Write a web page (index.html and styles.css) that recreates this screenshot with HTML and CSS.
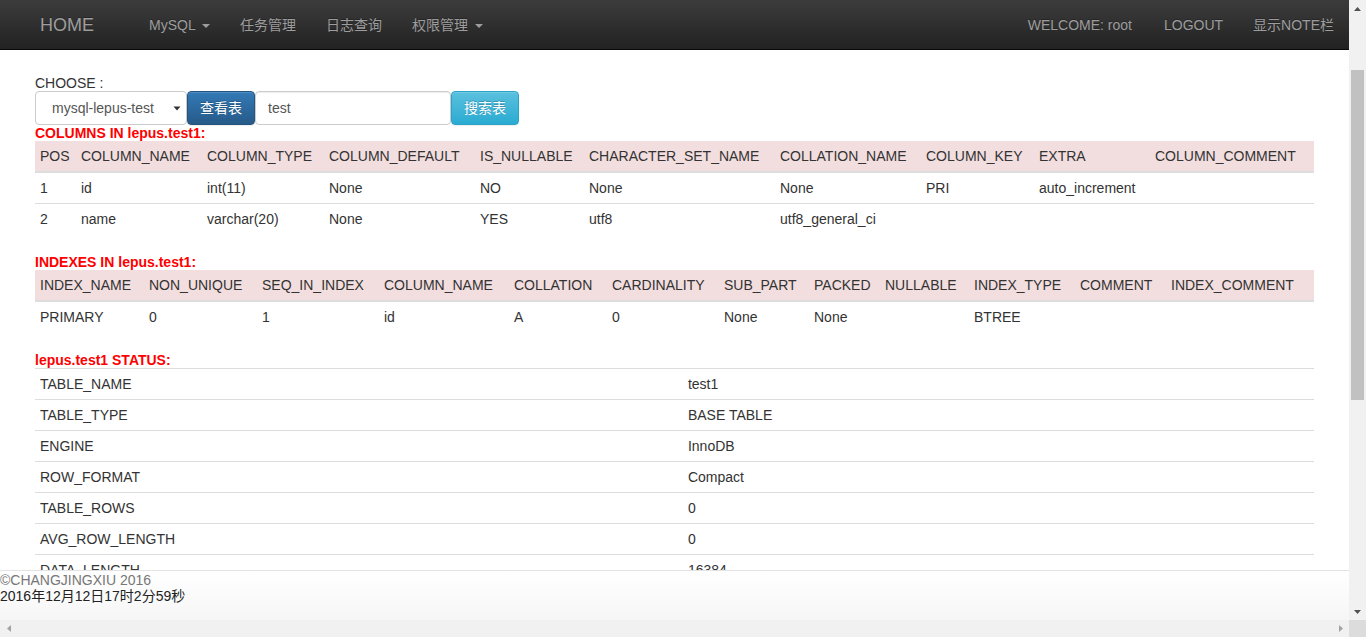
FILE: index.html
```html
<!DOCTYPE html>
<html lang="zh-CN">
<head>
<meta charset="utf-8">
<title>lepus</title>
<link rel="stylesheet" href="styles.css">
</head>
<body>
<div class="screen">
  <div class="page">
    <nav class="navbar">
      <div class="nav-left">
        <a class="brand">HOME</a>
        <ul class="nav">
          <li><a>MySQL <span class="caret"></span></a></li>
          <li><a>任务管理</a></li>
          <li><a>日志查询</a></li>
          <li><a>权限管理 <span class="caret"></span></a></li>
        </ul>
      </div>
      <ul class="nav">
        <li><a class="welcome">WELCOME: root</a></li>
        <li><a>LOGOUT</a></li>
        <li><a>显示NOTE栏</a></li>
      </ul>
    </nav>

    <main class="content">
      <div class="choose-label">CHOOSE :</div>
      <div class="toolbar">
        <div class="select">
          <span>mysql-lepus-test</span>
          <svg class="select-arrow" width="8" height="5" viewBox="0 0 8 5"><path d="M0.5 0.5h7L4 4.5z" fill="#333"/></svg>
        </div>
        <button class="btn btn-primary">查看表</button>
        <div class="input">test</div>
        <button class="btn btn-info">搜索表</button>
      </div>

      <div class="section-title">COLUMNS IN lepus.test1:</div>
      <table class="table cols">
        <thead>
          <tr><th>POS</th><th>COLUMN_NAME</th><th>COLUMN_TYPE</th><th>COLUMN_DEFAULT</th><th>IS_NULLABLE</th><th>CHARACTER_SET_NAME</th><th>COLLATION_NAME</th><th>COLUMN_KEY</th><th>EXTRA</th><th>COLUMN_COMMENT</th></tr>
        </thead>
        <tbody>
          <tr><td>1</td><td>id</td><td>int(11)</td><td>None</td><td>NO</td><td>None</td><td>None</td><td>PRI</td><td>auto_increment</td><td></td></tr>
          <tr><td>2</td><td>name</td><td>varchar(20)</td><td>None</td><td>YES</td><td>utf8</td><td>utf8_general_ci</td><td></td><td></td><td></td></tr>
        </tbody>
      </table>

      <div class="section-title">INDEXES IN lepus.test1:</div>
      <table class="table idx">
        <thead>
          <tr><th>INDEX_NAME</th><th>NON_UNIQUE</th><th>SEQ_IN_INDEX</th><th>COLUMN_NAME</th><th>COLLATION</th><th>CARDINALITY</th><th>SUB_PART</th><th>PACKED</th><th>NULLABLE</th><th>INDEX_TYPE</th><th>COMMENT</th><th>INDEX_COMMENT</th></tr>
        </thead>
        <tbody>
          <tr><td>PRIMARY</td><td>0</td><td>1</td><td>id</td><td>A</td><td>0</td><td>None</td><td>None</td><td></td><td>BTREE</td><td></td><td></td></tr>
        </tbody>
      </table>

      <div class="section-title">lepus.test1 STATUS:</div>
      <table class="table status">
        <tbody>
          <tr><td>TABLE_NAME</td><td>test1</td></tr>
          <tr><td>TABLE_TYPE</td><td>BASE TABLE</td></tr>
          <tr><td>ENGINE</td><td>InnoDB</td></tr>
          <tr><td>ROW_FORMAT</td><td>Compact</td></tr>
          <tr><td>TABLE_ROWS</td><td>0</td></tr>
          <tr><td>AVG_ROW_LENGTH</td><td>0</td></tr>
          <tr><td>DATA_LENGTH</td><td>16384</td></tr>
        </tbody>
      </table>
    </main>

    <footer class="footer">
      <div class="copy">©CHANGJINGXIU 2016</div>
      <div class="clock">2016年12月12日17时2分59秒</div>
    </footer>
  </div>

  <div class="vscroll">
    <div class="sb-btn"><svg width="7" height="4" viewBox="0 0 7 4"><path d="M0 4L3.5 0L7 4z" fill="#505050"/></svg></div>
    <div class="vtrack"><div class="vthumb"></div></div>
    <div class="sb-btn"><svg width="7" height="4" viewBox="0 0 7 4"><path d="M0 0L7 0L3.5 4z" fill="#505050"/></svg></div>
  </div>
  <div class="hscroll">
    <div class="sb-btn"><svg width="4" height="7" viewBox="0 0 4 7"><path d="M4 0L4 7L0 3.5z" fill="#a3a3a3"/></svg></div>
    <div class="htrack"></div>
    <div class="sb-btn"><svg width="4" height="7" viewBox="0 0 4 7"><path d="M0 0L4 3.5L0 7z" fill="#a3a3a3"/></svg></div>
  </div>
  <div class="corner"></div>
</div>
</body>
</html>
```

FILE: styles.css
```css
html, body {
  margin: 0;
  padding: 0;
  overflow: hidden;
}

body {
  font-family: "Liberation Sans", Arial, "Noto Sans CJK SC", sans-serif;
  font-size: 14px;
  line-height: 20px;
  color: #333;
  background: #fff;
}

.screen {
  width: 1366px;
  height: 637px;
  display: grid;
  grid-template-columns: 1349px 17px;
  grid-template-rows: 620px 17px;
  overflow: hidden;
}

.page {
  display: flex;
  flex-direction: column;
  min-height: 0;
  overflow: hidden;
}

/* ---------- navbar ---------- */
.navbar {
  flex: 0 0 50px;
  box-sizing: border-box;
  height: 50px;
  display: flex;
  justify-content: space-between;
  background: linear-gradient(to bottom, #3c3c3c 0, #222 100%);
  border-bottom: 1px solid #080808;
}

.nav-left {
  display: flex;
}

.brand {
  display: block;
  padding: 15px 40px;
  font-size: 18px;
  line-height: 20px;
  color: #9d9d9d;
  text-shadow: 0 -1px 0 rgba(0, 0, 0, .25);
}

.nav {
  display: flex;
  list-style: none;
  margin: 0;
  padding: 0;
}

.nav a {
  display: block;
  padding: 15px;
  line-height: 20px;
  color: #9d9d9d;
  text-shadow: 0 -1px 0 rgba(0, 0, 0, .25);
  white-space: nowrap;
}

.nav a.welcome {
  padding-right: 17px;
}

.caret {
  display: inline-block;
  width: 0;
  height: 0;
  margin-left: 3px;
  vertical-align: middle;
  border-top: 4px solid #9d9d9d;
  border-left: 4px solid transparent;
  border-right: 4px solid transparent;
}

/* ---------- content ---------- */
.content {
  flex: 1 1 auto;
  min-height: 0;
  overflow: hidden;
  padding: 25px 35px 0;
}

.choose-label {
  line-height: 16px;
}

.toolbar {
  display: flex;
  height: 34px;
}

.select {
  box-sizing: border-box;
  width: 152px;
  height: 34px;
  display: flex;
  align-items: center;
  justify-content: space-between;
  padding: 0 5px 0 16px;
  border: 1px solid #ccc;
  border-radius: 4px;
  color: #555;
  background: #fff;
}

.select-arrow {
  display: block;
}

.btn {
  box-sizing: border-box;
  height: 34px;
  width: 68px;
  padding: 6px 12px;
  font-family: inherit;
  font-size: 14px;
  line-height: 20px;
  color: #fff;
  border: 1px solid;
  border-radius: 4px;
  text-shadow: 0 -1px 0 rgba(0, 0, 0, .2);
  box-shadow: inset 0 1px 0 rgba(255, 255, 255, .15), 0 1px 1px rgba(0, 0, 0, .075);
  white-space: nowrap;
}

.btn-primary {
  background: linear-gradient(to bottom, #337ab7 0, #265a88 100%);
  border-color: #245580;
}

.btn-info {
  background: linear-gradient(to bottom, #5bc0de 0, #2aabd2 100%);
  border-color: #28a4c9;
}

.input {
  box-sizing: border-box;
  width: 196px;
  height: 34px;
  padding: 6px 12px;
  color: #555;
  border: 1px solid #ccc;
  border-radius: 4px;
  box-shadow: inset 0 1px 1px rgba(0, 0, 0, .075);
  background: #fff;
}

.section-title {
  color: #f00;
  font-weight: bold;
  line-height: 16px;
}

.table {
  width: 100%;
  border-collapse: collapse;
  border-spacing: 0;
  margin-bottom: 20px;
}

.table th,
.table td {
  padding: 5px;
  text-align: left;
  font-weight: normal;
  line-height: 20px;
  vertical-align: top;
  border-top: 1px solid #ddd;
  white-space: nowrap;
}

.table thead tr {
  background: #f2dede;
}

.table thead th {
  border-top: 0;
  border-bottom: 2px solid #ddd;
}

/* column widths of the COLUMNS table */
.cols { table-layout: fixed; }
.cols th:nth-child(1) { width: 41px; }
.cols th:nth-child(2) { width: 126px; }
.cols th:nth-child(3) { width: 122px; }
.cols th:nth-child(4) { width: 151px; }
.cols th:nth-child(5) { width: 109px; }
.cols th:nth-child(6) { width: 191px; }
.cols th:nth-child(7) { width: 146px; }
.cols th:nth-child(8) { width: 113px; }
.cols th:nth-child(9) { width: 116px; }
.cols th:nth-child(10) { width: 164px; }

/* column widths of the INDEXES table */
.idx { table-layout: fixed; }
.idx th:nth-child(1) { width: 109px; }
.idx th:nth-child(2) { width: 113px; }
.idx th:nth-child(3) { width: 122px; }
.idx th:nth-child(4) { width: 130px; }
.idx th:nth-child(5) { width: 98px; }
.idx th:nth-child(6) { width: 112px; }
.idx th:nth-child(7) { width: 90px; }
.idx th:nth-child(8) { width: 71px; }
.idx th:nth-child(9) { width: 89px; }
.idx th:nth-child(10) { width: 106px; }
.idx th:nth-child(11) { width: 91px; }
.idx th:nth-child(12) { width: 148px; }

.cols th, .idx th,
.cols td, .idx td {
  box-sizing: border-box;
  overflow: hidden;
}

.status td:first-child {
  width: 50.66%;
}

/* ---------- footer ---------- */
.footer {
  flex: 0 0 50px;
  box-sizing: border-box;
  height: 50px;
  border-top: 1px solid #e3e3e3;
  background: linear-gradient(to bottom, #fff 0, #f6f6f6 100%);
  line-height: 16px;
  padding-top: 1px;
}

.copy {
  color: #777;
}

.clock {
  color: #222;
}

/* ---------- fake scrollbars ---------- */
.vscroll {
  display: flex;
  flex-direction: column;
  background: #f1f1f1;
}

.sb-btn {
  flex: 0 0 17px;
  width: 17px;
  height: 17px;
  display: flex;
  align-items: center;
  justify-content: center;
}

.vtrack {
  flex: 1 1 auto;
  padding: 53px 2px 0;
}

.vthumb {
  height: 330px;
  background: #c1c1c1;
}

.hscroll {
  display: flex;
  background: #f1f1f1;
}

.htrack {
  flex: 1 1 auto;
}

.corner {
  background: #dcdcdc;
}
```
